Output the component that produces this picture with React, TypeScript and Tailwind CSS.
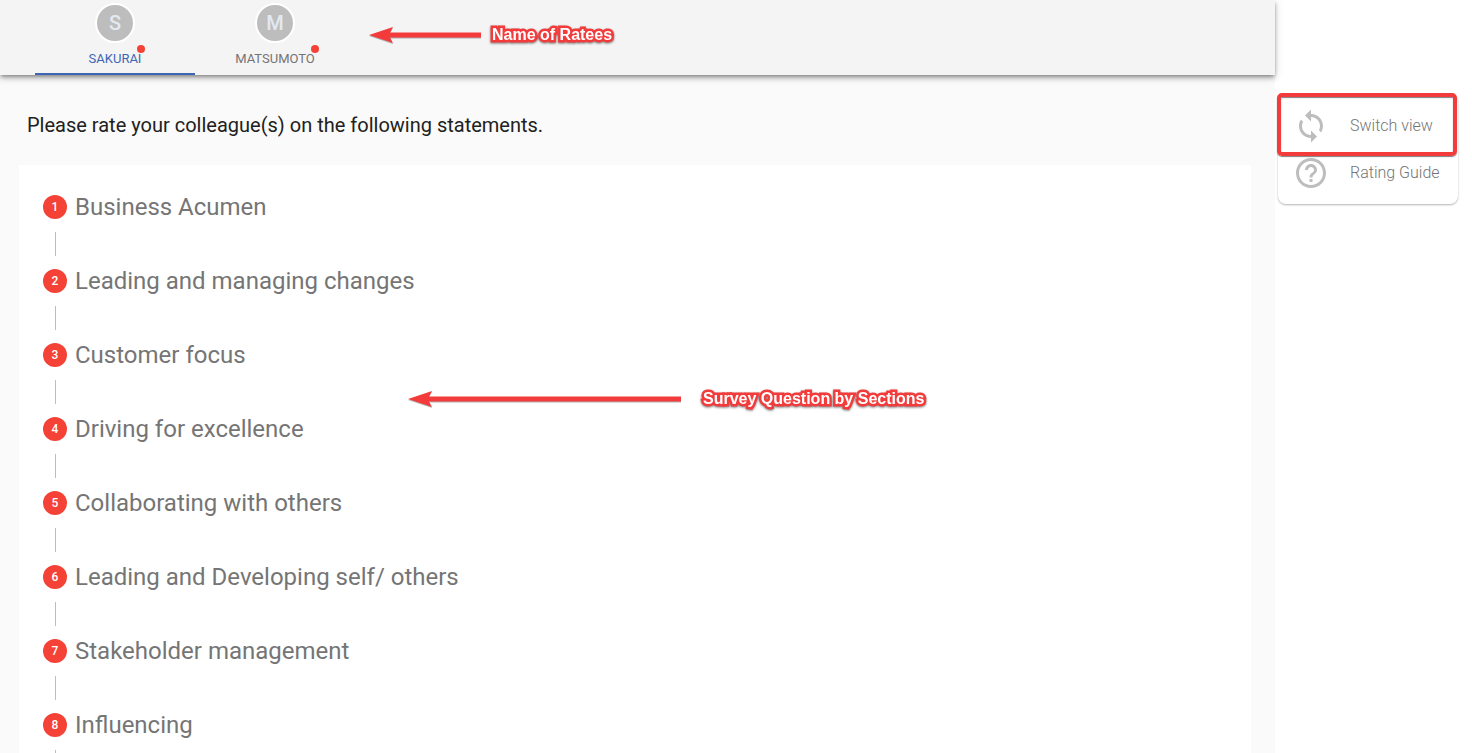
import { useState } from 'react';
import { MdHelpOutline, MdLoop } from 'react-icons/md';

interface Ratee {
  id: string;
  name: string;
}

const ratees: Ratee[] = [
  { id: 'sakurai', name: 'Sakurai' },
  { id: 'matsumoto', name: 'Matsumoto' },
];

const sections = [
  'Business Acumen',
  'Leading and managing changes',
  'Customer focus',
  'Driving for excellence',
  'Collaborating with others',
  'Leading and Developing self/ others',
  'Stakeholder management',
  'Influencing',
];

export default function App() {
  const [activeRatee, setActiveRatee] = useState('sakurai');

  return (
    <div className="flex h-screen overflow-hidden bg-white font-[Roboto,sans-serif]">
      <div className="flex min-w-0 flex-1 flex-col bg-[#fafafa]">
        <header className="z-10 flex shrink-0 bg-[#f4f4f4] px-[35px] shadow-[0_2px_4px_-1px_rgba(0,0,0,0.4),0_4px_5px_rgba(0,0,0,0.14),0_1px_10px_rgba(0,0,0,0.12)]">
          <div role="tablist" aria-label="Ratees" className="flex">
            {ratees.map((ratee) => (
              <RateeTab
                key={ratee.id}
                ratee={ratee}
                active={ratee.id === activeRatee}
                onSelect={() => setActiveRatee(ratee.id)}
              />
            ))}
          </div>
          <div className="flex items-center gap-[11px] pb-[5px] pl-[14px]">
            <Arrow length={112} />
            <Note>Name of Ratees</Note>
          </div>
        </header>

        <main className="flex min-h-0 flex-1 flex-col pr-6 pl-[19px]">
          <h1 className="px-2 pt-9 pb-[26px] text-xl leading-7 text-[#212121]">
            Please rate your colleague(s) on the following statements.
          </h1>
          <div className="relative min-h-0 flex-1 overflow-hidden bg-white px-6 pt-[25px]">
            <ol>
              {sections.map((section, index) => (
                <li key={section}>
                  <div className="flex items-center gap-2">
                    <span className="flex size-6 items-center justify-center rounded-full bg-[#f44336] text-xs font-medium text-white">
                      {index + 1}
                    </span>
                    <span className="text-2xl leading-[34px] text-[#757575]">{section}</span>
                  </div>
                  <div className="my-2 ml-3 h-6 border-l border-[#bdbdbd]" />
                </li>
              ))}
            </ol>
            <div className="absolute top-56 left-[389px] flex items-center gap-[22px]">
              <Arrow length={273} />
              <Note>Survey Question by Sections</Note>
            </div>
          </div>
        </main>
      </div>

      <aside className="w-[197px] shrink-0 pt-[94px] pr-[14px] pl-[3px]">
        <div className="relative flex flex-col rounded-lg py-2 shadow-[0_1px_2px_rgba(0,0,0,0.3)]">
          <button
            type="button"
            className="flex h-[47px] items-center gap-[21px] pl-[15px] text-base font-light whitespace-nowrap text-[#757575]"
          >
            <MdLoop className="size-9 text-[#bdbdbd]" />
            Switch view
          </button>
          <button
            type="button"
            className="flex h-[47px] items-center gap-[21px] pl-[15px] text-base font-light whitespace-nowrap text-[#757575]"
          >
            <MdHelpOutline className="size-9 text-[#bdbdbd]" />
            Rating Guide
          </button>
          <div className="pointer-events-none absolute -top-px -left-px h-[63px] w-full rounded-[5px] border-4 border-[#f33b3b] shadow-[0_1px_1px_rgba(0,0,0,0.5),inset_0_1px_1px_rgba(0,0,0,0.5)]" />
        </div>
      </aside>
    </div>
  );
}

function RateeTab({ ratee, active, onSelect }: { ratee: Ratee; active: boolean; onSelect: () => void }) {
  return (
    <button
      type="button"
      role="tab"
      aria-selected={active}
      onClick={onSelect}
      className={`flex h-[75px] w-40 flex-col items-center border-b-2 pt-[3px] ${
        active ? 'border-[#3f66b5] text-[#3f66b5]' : 'border-transparent text-[#757575]'
      }`}
    >
      <span className="flex size-10 items-center justify-center rounded-full border-2 border-white bg-[#bdbdbd] text-xl font-medium text-[#e3e9f1]">
        {ratee.name[0]}
      </span>
      <span className="relative mt-1.5 text-[13px] leading-5 uppercase">
        {ratee.name}
        <span className="absolute -top-1 -right-1 size-2 rounded-full bg-[#f44336]" />
      </span>
    </button>
  );
}

function Arrow({ length }: { length: number }) {
  return (
    <svg
      width={length}
      height="18"
      viewBox={`0 0 ${length} 18`}
      className="shrink-0 drop-shadow-[0_1px_0_rgba(0,0,0,0.3)]"
      aria-hidden="true"
    >
      <path d={`M0 9 L24 1 L21 6.5 H${length} V11.5 H21 L24 17 Z`} fill="#f33b3b" />
    </svg>
  );
}

function Note({ children }: { children: string }) {
  return (
    <span className="font-['Liberation_Sans',sans-serif] text-base leading-5 font-bold whitespace-nowrap text-white drop-shadow-[0_1px_1px_rgba(0,0,0,0.5)] [-webkit-text-stroke:5px_#f33b3b] [paint-order:stroke_fill]">
      {children}
    </span>
  );
}
